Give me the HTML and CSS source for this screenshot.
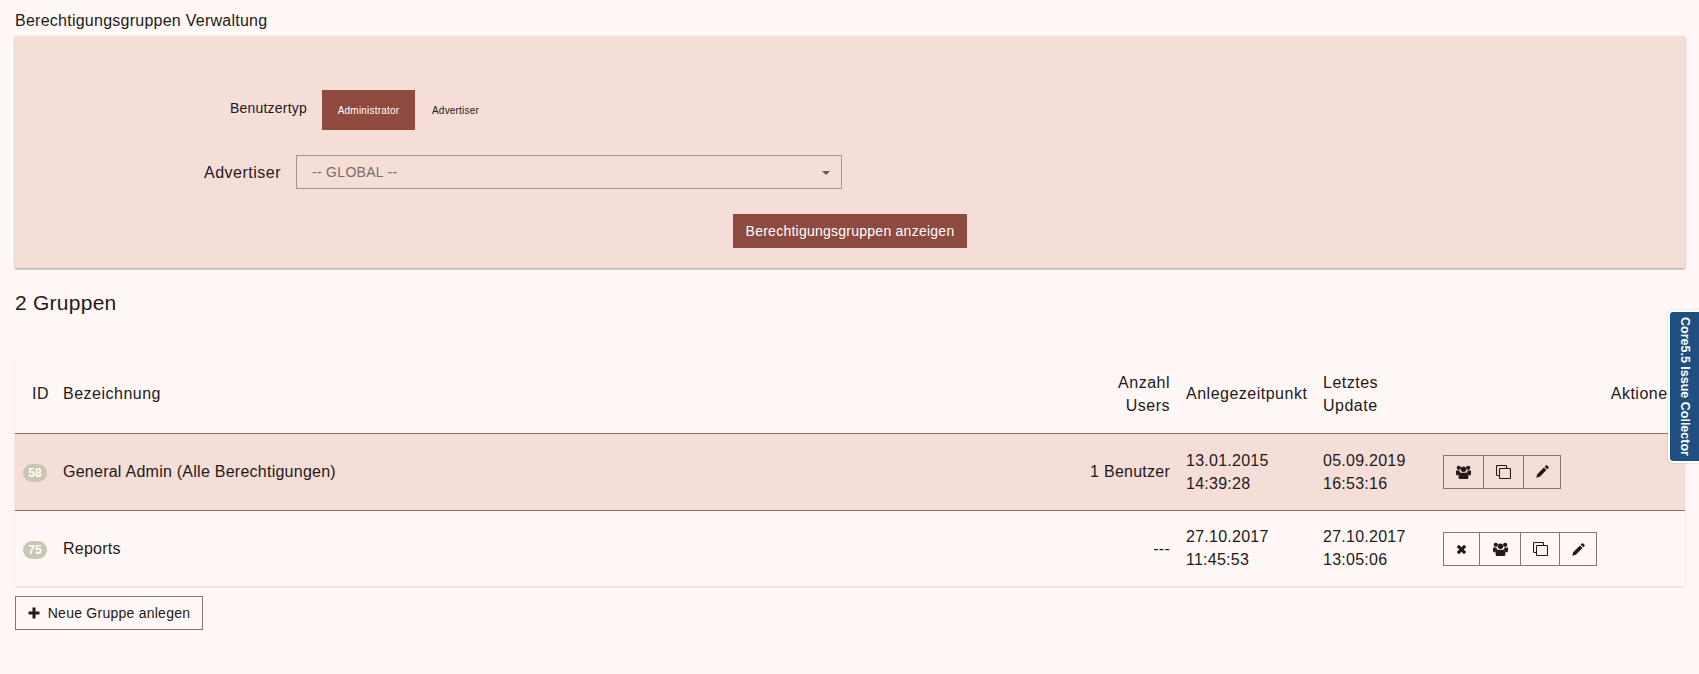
FILE: index.html
```html
<!DOCTYPE html>
<html lang="de">
<head>
<meta charset="utf-8">
<title>Berechtigungsgruppen Verwaltung</title>
<link rel="stylesheet" href="styles.css">
</head>
<body>
<svg class="defs" width="0" height="0" aria-hidden="true">
  <defs>
    <symbol id="i-users" viewBox="0 0 16 15">
      <circle cx="3" cy="3" r="2.300"/><circle cx="13" cy="3" r="2.300"/><circle cx="8" cy="4.600" r="2.900"/>
      <path d="M0 6h3.500c.2 1 .8 1.800 1.300 2.300-1.300.6-2 1.500-2.200 2.700H.9C.3 11 0 10.500 0 10zM16 6h-3.500c-.2 1-.8 1.800-1.300 2.300 1.300.6 2 1.500 2.200 2.700h1.700c.6 0 .9-.5.900-1z"/>
      <path d="M5 8.300h6c1.300 0 2.200 1.100 2.200 2.700v2.300c0 1-.6 1.700-1.500 1.700H4.300c-.9 0-1.500-.7-1.500-1.700V11c0-1.600.9-2.700 2.200-2.700z"/>
    </symbol>
    <symbol id="i-copy" viewBox="0 0 15 14">
      <path class="ln" d="M3.500 10.500H1.400a.9.9 0 0 1-.9-.9V1.400a.9.9 0 0 1 .9-.9h8.200a.9.9 0 0 1 .9.900v2.100"/>
      <rect class="ln" x="3.500" y="3.500" width="11" height="10" rx=".8"/>
    </symbol>
    <symbol id="i-pencil" viewBox="0 0 14 14">
      <path d="M10.600.6c.4-.4 1-.4 1.400 0l1.400 1.400c.4.4.4 1 0 1.400l-1.300 1.300-2.800-2.800zM8.500 2.700l2.800 2.800-7.200 7.200L.2 13.800l1.100-3.900z"/>
    </symbol>
    <symbol id="i-times" viewBox="0 0 12 12">
      <path d="M.8 3.200 3.200.8 6 3.600 8.800.8l2.400 2.400L8.400 6l2.800 2.800-2.400 2.400L6 8.400l-2.800 2.800-2.400-2.400L3.600 6z"/>
    </symbol>
    <symbol id="i-plus" viewBox="0 0 12 12">
      <path d="M4.500.5h3v4h4v3h-4v4h-3v-4h-4v-3h4z"/>
    </symbol>
  </defs>
</svg>

<h1 class="page-title">Berechtigungsgruppen Verwaltung</h1>

<section class="filter-panel">
  <div class="type-row">
    <span class="type-label">Benutzertyp</span>
    <span class="tab tab-active">Administrator</span>
    <span class="tab">Advertiser</span>
  </div>
  <div class="advertiser-row">
    <label class="advertiser-label">Advertiser</label>
    <div class="select-box"><span>-- GLOBAL --</span><i class="caret"></i></div>
  </div>
  <div class="submit-row"><button class="btn-primary">Berechtigungsgruppen anzeigen</button></div>
</section>

<h2 class="count-title">2 Gruppen</h2>

<div class="table-card">
  <table class="groups">
    <colgroup>
      <col class="c-id"><col class="c-name"><col class="c-users"><col class="c-created"><col class="c-updated"><col class="c-actions">
    </colgroup>
    <thead>
      <tr>
        <th class="id-head">ID</th>
        <th>Bezeichnung</th>
        <th class="right">Anzahl<br>Users</th>
        <th>Anlegezeitpunkt</th>
        <th>Letztes<br>Update</th>
        <th class="right">Aktionen</th>
      </tr>
    </thead>
    <tbody>
      <tr class="row-shaded">
        <td><span class="badge">58</span></td>
        <td>General Admin (Alle Berechtigungen)</td>
        <td class="right">1 Benutzer</td>
        <td>13.01.2015<br>14:39:28</td>
        <td>05.09.2019<br>16:53:16</td>
        <td>
          <div class="actions">
            <button class="act act-l"><svg class="ico-users"><use href="#i-users"/></svg></button>
            <button class="act act-l"><svg class="ico-copy"><use href="#i-copy"/></svg></button>
            <button class="act act-m"><svg class="ico-pencil"><use href="#i-pencil"/></svg></button>
          </div>
        </td>
      </tr>
      <tr class="row-last">
        <td><span class="badge">75</span></td>
        <td>Reports</td>
        <td class="right">---</td>
        <td>27.10.2017<br>11:45:53</td>
        <td>27.10.2017<br>13:05:06</td>
        <td>
          <div class="actions">
            <button class="act act-s"><svg class="ico-times"><use href="#i-times"/></svg></button>
            <button class="act act-xl"><svg class="ico-users"><use href="#i-users"/></svg></button>
            <button class="act act-n"><svg class="ico-copy"><use href="#i-copy"/></svg></button>
            <button class="act act-m"><svg class="ico-pencil"><use href="#i-pencil"/></svg></button>
          </div>
        </td>
      </tr>
    </tbody>
  </table>
</div>

<button class="btn-outline"><svg class="ico-plus"><use href="#i-plus"/></svg>Neue Gruppe anlegen</button>

<aside class="collector">Core5.5 Issue Collector</aside>
</body>
</html>
```
FILE: styles.css
```css
* { box-sizing: border-box; }
html, body { margin: 0; height: 100%; overflow: hidden; }
body {
  background: #fff8f6;
  color: #231919;
  font-family: "Liberation Sans", Arial, sans-serif;
  font-size: 16px;
  letter-spacing: .25px;
  padding: 0 14px 0 15px;
  line-height: 23px;
}
.defs { position: absolute; }
.page-title {
  margin: 0;
  padding-top: 9px;
  height: 36px;
  font-size: 16px;
  font-weight: 400;
  line-height: 23px;
  letter-spacing: .25px;
}
.filter-panel {
  height: 232px;
  background: #f5ddd8;
  box-shadow: 0 1px 2px rgba(0,0,0,.4);
  padding-top: 54px;
}
.type-row { display: flex; align-items: center; padding-left: 215px; height: 40px; }
.type-label { font-size: 14px; width: 92px; margin-top: -3px; letter-spacing: .2px; }
.tab { font-size: 10px; padding: 0 17px; height: 40px; display: flex; align-items: center; letter-spacing: .2px; }
.tab-active { background: #8e4a3f; color: #fff; width: 93px; padding: 0; justify-content: center; }
.advertiser-row { display: flex; align-items: center; margin-top: 25px; padding-left: 189px; }
.advertiser-label { font-size: 16px; width: 92px; letter-spacing: .5px; }
.select-box {
  width: 546px; height: 34px;
  border: 1px solid #ad9490;
  display: flex; align-items: center; justify-content: space-between;
  padding: 0 11px 0 15px;
  color: #7f6a67;
  font-size: 14px;
  letter-spacing: .3px;
}
.caret { border: 4px solid transparent; border-top: 4px solid #6b5552; border-bottom: 0; width: 0; height: 0; margin-top: 2px; }
.submit-row { display: flex; padding-left: 718px; margin-top: 25px; }
.btn-primary {
  width: 234px; height: 34px;
  border: 0; background: #8e4a3f; color: #fff;
  font: inherit; font-size: 14px; letter-spacing: .25px;
}
.count-title {
  margin: 23px 0 0;
  font-size: 21px;
  font-weight: 400;
  line-height: 24px;
  height: 64px;
  letter-spacing: .25px;
}
.table-card { box-shadow: 0 1px 2px rgba(0,0,0,.14); }
.groups { width: 100%; border-collapse: collapse; table-layout: fixed; }
.c-id { width: 40px; }
.c-name { width: 1003px; }
.c-users { width: 120px; }
.c-created { width: 137px; }
.c-updated { width: 120px; }
.groups th, .groups td { text-align: left; padding: 0 8px; font-weight: 400; vertical-align: middle; }
.groups th { height: 78px; letter-spacing: .5px; }
.groups td { height: 77px; border-top: 1px solid #877371; }
.row-last td { height: 76px; }
.groups .right { text-align: right; }
.groups .id-head { padding-left: 17px; padding-right: 0; }
.row-shaded { background: #f5ddd8; }
.badge {
  display: inline-block;
  width: 24px; height: 18px;
  line-height: 18px;
  border-radius: 9px;
  background: #cbc6b2;
  color: #fff;
  font-size: 12px;
  font-weight: 700;
  text-align: center;
  letter-spacing: 0;
  vertical-align: middle;
}
.actions { display: flex; }
.row-last .actions { padding-top: 2px; }
.act {
  height: 34px;
  border: 1px solid #877371;
  margin-left: -1px;
  background: transparent;
  padding: 0;
  display: flex; align-items: center; justify-content: center;
  fill: #231919;
}
.act:first-child { margin-left: 0; }
.act-l { width: 41px; }
.act-xl { width: 42px; }
.act-n { width: 40px; }
.act-m { width: 38px; }
.act-s { width: 37px; }
.ico-users { width: 15px; height: 14px; }
.ico-copy { width: 15px; height: 14px; }
.ico-pencil { width: 13px; height: 13px; }
.ico-times { width: 11px; height: 11px; }
.ico-plus { width: 12px; height: 12px; fill: #231919; margin-right: 8px; }
.ln { fill: none; stroke: #231919; stroke-width: 1.100; }
.btn-outline {
  margin: 10px 0 0;
  width: 188px; height: 34px;
  border: 1px solid #877371;
  background: transparent;
  color: #231919;
  font: inherit; font-size: 14px; letter-spacing: .25px;
  display: flex; align-items: center; justify-content: center;
}
.collector {
  position: absolute;
  top: 310px; right: 0;
  width: 31px; height: 153px;
  background: #1f4e80;
  border: 2px solid #fff;
  border-right: 0;
  border-radius: 5px 0 0 5px;
  color: #fff;
  font-size: 12.500px;
  font-weight: 700;
  letter-spacing: 0;
  writing-mode: vertical-rl;
  display: flex; align-items: center; justify-content: center;
  line-height: 1;
  box-shadow: 0 0 2px rgba(0,0,0,.25);
}
```
